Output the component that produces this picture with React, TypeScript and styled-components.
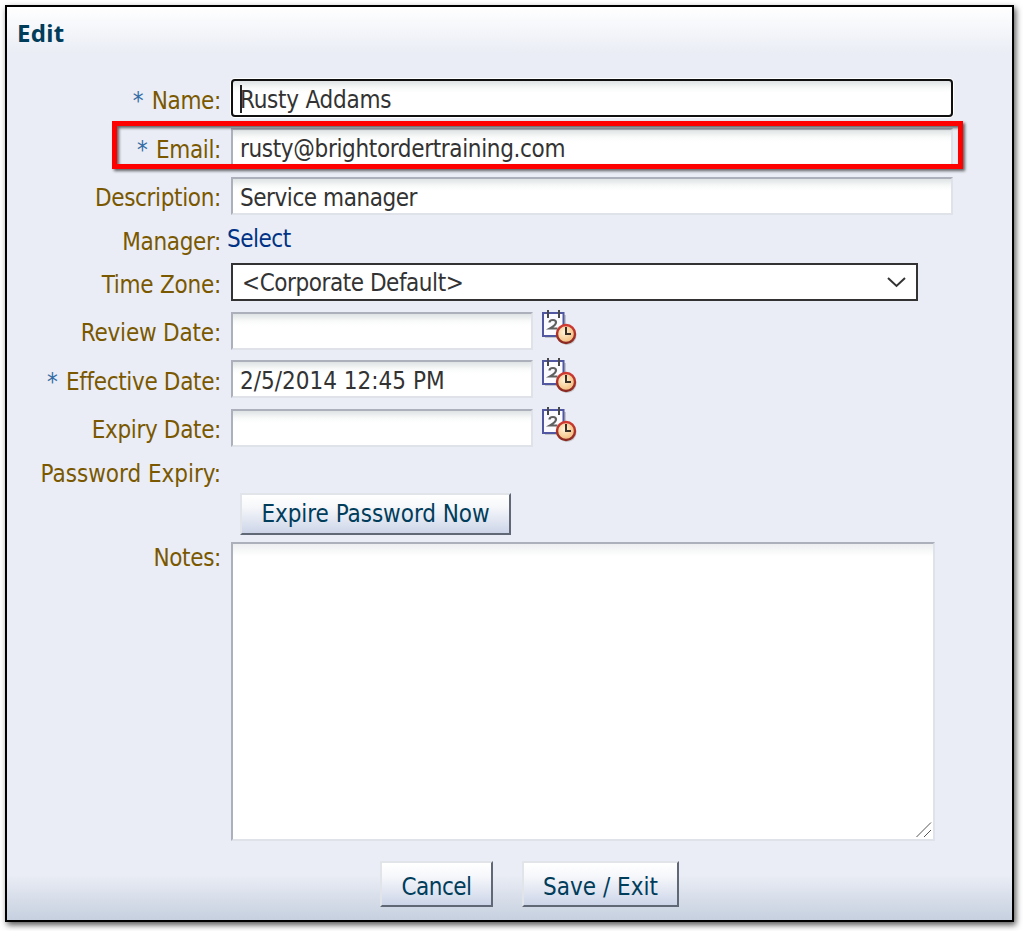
import React from "react";
import styled, { createGlobalStyle } from "styled-components";

const Global = createGlobalStyle`
  *{box-sizing:border-box}
  html,body{margin:0;background:#fff}
  body{font-family:"DejaVu Sans Condensed","DejaVu Sans",sans-serif;font-stretch:condensed;font-size:24px;color:#333}
`;
const Page = styled.div`padding:5px 9px 9px 5px;width:1023px;height:931px;overflow:hidden;`;
const Dialog = styled.main`
  width:1009px;height:917px;border:2px solid #000;position:relative;
  display:flex;flex-direction:column;
  background:linear-gradient(#fff 0,#eaedf5 46px,#eaedf5 868px,#c6d0df 913px);
  box-shadow:2px 3px 6px rgba(0,0,0,.65);
`;
const Header = styled.header`height:72px;padding:9px 0 0 10px;`;
const Title = styled.h1`margin:0;font:700 24px/33px "Noto Sans",sans-serif;color:#003d5b;letter-spacing:.3px;`;
const Row = styled.div<{ h: number; indent?: number }>`display:flex;height:${p => p.h}px;padding-left:${p => p.indent ?? 0}px;`;
const Label = styled.label<{ base: number; track?: number }>`
  width:214px;flex:none;text-align:right;color:#7a5800;white-space:pre;
  line-height:32px;padding-top:${p => p.base - 24}px;margin-right:10px;letter-spacing:${p => p.track ?? -0.35}px;
`;
const Star = styled.span`color:#336ca5;margin-right:2px;`;
const Field = styled.div<{ w: number; focus?: boolean; track?: number }>`
  width:${p => p.w}px;height:38px;padding-left:7px;letter-spacing:${p => p.track ?? 0}px;
  border:2px solid;border-color:#abb0bb #dfe2e8 #dfe2e8 #abb0bb;
  background:linear-gradient(#dfe3e4 0,#f8faf9 7px,#fff 12px);line-height:38px;white-space:pre;
  ${p => p.focus && `border-color:#101010;border-radius:4px;box-shadow:0 0 0 1px #fff;`}
`;
const Caret = styled.span`display:inline-block;width:2px;height:28px;background:#222;margin-right:-2px;vertical-align:-5px;`;
const Link = styled.a`color:#003286;line-height:37px;margin-left:-4px;letter-spacing:-.5px;`;
const Select = styled.div`
  width:687px;height:38px;border:2px solid #333;background:#fff;display:flex;justify-content:space-between;
  line-height:37px;padding:0 9px;letter-spacing:-.45px;
`;
const Btn = styled.button<{ w: number; h: number; track?: number; drop?: number }>`
  width:${p => p.w}px;height:${p => p.h}px;border:2px solid;border-color:#e1e4e8 #5f6874 #5f6874 #e1e4e8;
  background:linear-gradient(#fff,#f7f8fb 30%,#ccd5e8);padding:${p => p.drop ?? 0}px 0 0;color:#003d5b;font:inherit;
  letter-spacing:${p => p.track ?? 0}px;
`;
const Notes = styled.div`
  width:704px;height:299px;border:2px solid;border-color:#abb0bb #dfe2e8 #dfe2e8 #abb0bb;
  background:linear-gradient(#eceeef 0,#fff 12px);display:flex;align-items:flex-end;justify-content:flex-end;
`;
const Footer = styled.footer`display:flex;gap:29px;padding-left:373px;`;
const Highlight = styled.div`
  position:absolute;left:105px;top:114px;width:851px;height:48px;border:5px solid #f00;
  filter:drop-shadow(2px 2px 1.5px rgba(0,0,0,.6));
`;
const IconBox = styled.svg`margin:-3px 0 0 7px;display:block;`;

const CalendarIcon = () => (
  <IconBox width="38" height="38" viewBox="0 0 38 38">
    <defs>
      <radialGradient id="face" cx=".4" cy=".4"><stop offset="0" stopColor="#fff3d6" /><stop offset="1" stopColor="#f5c58a" /></radialGradient>
      <linearGradient id="rim" x2="0" y2="1"><stop offset="0" stopColor="#d23a32" /><stop offset="1" stopColor="#8a2a22" /></linearGradient>
    </defs>
    <path d="M25 6V28H5" fill="none" stroke="#aaa" strokeWidth="2" opacity=".6" />
    <path d="M3 4H23.500V27H3Z" fill="#fafaff" stroke="#5157a0" strokeWidth="2" />
    <path d="M8 1V9M19 1V9" stroke="#484848" strokeWidth="2" />
    <path d="M9.500 13.500Q9.500 11 13 11Q16 11 16 13.500Q16 16 10 19.500H17.500" fill="none" stroke="#606060" strokeWidth="2.200" />
    <circle cx="27" cy="26.500" r="9.500" fill="#999" opacity=".45" />
    <circle cx="26" cy="25" r="9" fill="url(#face)" stroke="url(#rim)" strokeWidth="2.400" />
    <path d="M26 18V25H31" fill="none" stroke="#383028" strokeWidth="2" />
  </IconBox>
);

export default function App() {
  return (
    <>
      <Global />
      <Page>
        <Dialog>
          <Header><Title>Edit</Title></Header>
          <Row h={49}><Label base={30}><Star>*</Star> Name:</Label><Field w={722} focus track={-0.25}><Caret />Rusty Addams</Field></Row>
          <Row h={49}><Label base={30}><Star>*</Star> Email:</Label><Field w={722} track={-0.35}>rusty@brightordertraining.com</Field></Row>
          <Row h={44}><Label base={29}>Description:</Label><Field w={722} track={-0.45}>Service manager</Field></Row>
          <Row h={42}><Label base={29}>Manager:</Label><Link>Select</Link></Row>
          <Row h={49}><Label base={30} track={-0.25}>Time Zone:</Label><Select><span>&lt;Corporate Default&gt;</span>
            <svg width="20" height="34" viewBox="0 0 20 34"><path d="M1 13L9.500 21L18 13" fill="none" stroke="#333" strokeWidth="2" /></svg></Select></Row>
          <Row h={48}><Label base={29} track={-0.2}>Review Date:</Label><Field w={302} /><CalendarIcon /></Row>
          <Row h={49}><Label base={30}><Star>*</Star> Effective Date:</Label><Field w={302}>2/5/2014 12:45 PM</Field><CalendarIcon /></Row>
          <Row h={44}><Label base={29}>Expiry Date:</Label><Field w={302} /><CalendarIcon /></Row>
          <Row h={40}><Label base={29} track={-0.03}>Password Expiry:</Label></Row>
          <Row h={49} indent={233}><Btn w={271} h={42} track={-0.05}>Expire Password Now</Btn></Row>
          <Row h={319}><Label base={24}>Notes:</Label><Notes>
            <svg width="18" height="18"><path d="M1.500 16L16 1.500M9 16L16 9" stroke="#555" /></svg></Notes></Row>
          <Footer><Btn w={113} h={46} track={-0.5} drop={5}>Cancel</Btn><Btn w={157} h={46} drop={5}>Save / Exit</Btn></Footer>
          <Highlight />
        </Dialog>
      </Page>
    </>
  );
}
